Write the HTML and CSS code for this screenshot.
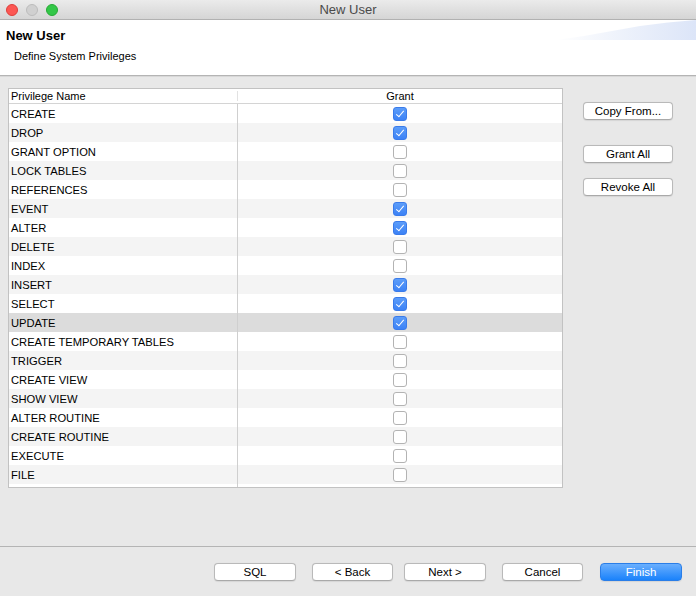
FILE: index.html
```html
<!DOCTYPE html>
<html>
<head>
<meta charset="utf-8">
<link rel="stylesheet" href="styles.css">
</head>
<body>
<div class="window">
  <div class="titlebar">
    <div class="lights">
      <span class="light red"></span>
      <span class="light gray"></span>
      <span class="light green"></span>
    </div>
    <div class="title">New User</div>
  </div>
  <div class="header">
    <div class="h-title">New User</div>
    <div class="h-sub">Define System Privileges</div>
  </div>
  <div class="main">
    <div class="table">
      <div class="thead">
        <div class="th th-name">Privilege Name</div>
        <div class="th th-grant">Grant</div>
      </div>
      <div class="tbody">
        <div class="row"><div class="cell name">CREATE</div><div class="cell grant"><span class="cb on"></span></div></div>
        <div class="row alt"><div class="cell name">DROP</div><div class="cell grant"><span class="cb on"></span></div></div>
        <div class="row"><div class="cell name">GRANT OPTION</div><div class="cell grant"><span class="cb"></span></div></div>
        <div class="row alt"><div class="cell name">LOCK TABLES</div><div class="cell grant"><span class="cb"></span></div></div>
        <div class="row"><div class="cell name">REFERENCES</div><div class="cell grant"><span class="cb"></span></div></div>
        <div class="row alt"><div class="cell name">EVENT</div><div class="cell grant"><span class="cb on"></span></div></div>
        <div class="row"><div class="cell name">ALTER</div><div class="cell grant"><span class="cb on"></span></div></div>
        <div class="row alt"><div class="cell name">DELETE</div><div class="cell grant"><span class="cb"></span></div></div>
        <div class="row"><div class="cell name">INDEX</div><div class="cell grant"><span class="cb"></span></div></div>
        <div class="row alt"><div class="cell name">INSERT</div><div class="cell grant"><span class="cb on"></span></div></div>
        <div class="row"><div class="cell name">SELECT</div><div class="cell grant"><span class="cb on"></span></div></div>
        <div class="row sel"><div class="cell name">UPDATE</div><div class="cell grant"><span class="cb on"></span></div></div>
        <div class="row"><div class="cell name">CREATE TEMPORARY TABLES</div><div class="cell grant"><span class="cb"></span></div></div>
        <div class="row alt"><div class="cell name">TRIGGER</div><div class="cell grant"><span class="cb"></span></div></div>
        <div class="row"><div class="cell name">CREATE VIEW</div><div class="cell grant"><span class="cb"></span></div></div>
        <div class="row alt"><div class="cell name">SHOW VIEW</div><div class="cell grant"><span class="cb"></span></div></div>
        <div class="row"><div class="cell name">ALTER ROUTINE</div><div class="cell grant"><span class="cb"></span></div></div>
        <div class="row alt"><div class="cell name">CREATE ROUTINE</div><div class="cell grant"><span class="cb"></span></div></div>
        <div class="row"><div class="cell name">EXECUTE</div><div class="cell grant"><span class="cb"></span></div></div>
        <div class="row alt"><div class="cell name">FILE</div><div class="cell grant"><span class="cb"></span></div></div>
        <div class="row filler"><div class="cell name"></div><div class="cell grant"></div></div>
      </div>
    </div>
    <div class="side">
      <button class="btn side-btn copy">Copy From...</button>
      <button class="btn side-btn grant-all">Grant All</button>
      <button class="btn side-btn">Revoke All</button>
    </div>
  </div>
  <div class="footer">
    <button class="btn foot-btn b-sql">SQL</button>
    <button class="btn foot-btn b-back">&lt; Back</button>
    <button class="btn foot-btn b-next">Next &gt;</button>
    <button class="btn foot-btn b-cancel">Cancel</button>
    <button class="btn foot-btn primary">Finish</button>
  </div>
</div>
</body>
</html>
```
FILE: styles.css
```css
* { box-sizing: border-box; }
html, body {
  margin: 0;
  padding: 0;
}
body {
  width: 696px;
  height: 596px;
  overflow: hidden;
  background: #e8e8e8;
  font-family: "Liberation Sans", Arial, sans-serif;
  font-size: 11px;
  color: #000;
}
.window {
  display: flex;
  flex-direction: column;
  height: 596px;
}
.titlebar {
  height: 20px;
  flex: none;
  display: flex;
  align-items: center;
  position: relative;
  background: linear-gradient(#ebebeb, #d5d5d5);
  border-bottom: 1px solid #b1b1b1;
}
.lights {
  display: flex;
  gap: 8px;
  padding-left: 6px;
}
.light {
  width: 12px;
  height: 12px;
  border-radius: 50%;
  display: block;
}
.light.red { background: #fc5753; border: 1px solid #de3f3b; }
.light.gray { background: #d0d0d0; border: 1px solid #bcbcbc; }
.light.green { background: #33c748; border: 1px solid #27aa35; }
.title {
  position: absolute;
  left: 0;
  right: 0;
  top: 2px;
  text-align: center;
  font-size: 13px;
  color: #4a4a4a;
  line-height: 15px;
}
.header {
  flex: none;
  height: 56px;
  background: #fff;
  position: relative;
  border-bottom: 1px solid #b4b4b4;
  box-shadow: 0 1px 0 #d8d8d8;
  padding-top: 8px;
  overflow: hidden;
}
.header::after {
  content: "";
  position: absolute;
  right: 0;
  top: 0;
  width: 140px;
  height: 20px;
  background: linear-gradient(to right, rgba(220,229,248,0) 0%, rgba(224,232,248,0.55) 45%, #dce5f8 100%);
  clip-path: polygon(0 100%, 20% 80%, 40% 55%, 60% 30%, 80% 12%, 100% 0, 100% 100%);
}
.h-title {
  font-weight: bold;
  font-size: 13px;
  padding-left: 6px;
  line-height: 15px;
}
.h-sub {
  padding-left: 14px;
  margin-top: 7px;
  font-size: 11px;
  line-height: 13px;
}
.main {
  flex: 1;
  display: flex;
  align-items: flex-start;
  padding: 11px 0 0 8px;
  margin-top: 1px;
}
.table {
  width: 555px;
  height: 400px;
  background: #fff;
  border: 1px solid #c2c2c2;
  display: flex;
  flex-direction: column;
}
.thead {
  display: grid;
  grid-template-columns: 229px 1fr;
  height: 15px;
  border-bottom: 1px solid #d4d4d4;
  flex: none;
}
.th {
  line-height: 14px;
  font-size: 11px;
}
.th-name {
  padding-left: 2px;
  position: relative;
}
.th-name::after {
  content: "";
  position: absolute;
  right: 0;
  top: 2px;
  height: 10px;
  width: 1px;
  background: #e2e2e2;
}
.th-grant { text-align: center; }
.tbody {
  flex: 1;
  display: flex;
  flex-direction: column;
}
.row {
  display: grid;
  grid-template-columns: 229px 1fr;
  height: 19px;
  flex: none;
}
.row.alt { background: #f4f4f4; }
.row.sel { background: #dcdcdc; }
.row.filler { flex: 1; height: auto; }
.cell {
  display: flex;
  align-items: center;
}
.cell.name {
  padding-left: 2px;
  border-right: 1px solid #cfcfcf;
  font-size: 11.2px;
}
.cell.grant {
  justify-content: center;
}
.cb {
  width: 14px;
  height: 14px;
  border-radius: 3px;
  background: #fff;
  border: 1px solid #b3b3b3;
  display: block;
  position: relative;
}
.cb.on {
  background: linear-gradient(#5c9df9, #3c82f6);
  border-color: #3a7bea;
}
.cb.on::after {
  content: "";
  position: absolute;
  left: 4px;
  top: 1px;
  width: 3px;
  height: 7px;
  border-right: 1.6px solid #fff;
  border-bottom: 1.6px solid #fff;
  transform: rotate(40deg);
}
.side {
  display: flex;
  flex-direction: column;
  padding-left: 20px;
  padding-top: 14px;
}
.btn {
  font-family: "Liberation Sans", Arial, sans-serif;
  font-size: 11px;
  color: #000;
  background: #fff;
  border: 1px solid #b9b9b9;
  border-bottom-color: #a9a9a9;
  border-radius: 4px;
  height: 18px;
  padding: 0;
  line-height: 16px;
  box-shadow: 0 0.5px 1px rgba(0,0,0,0.08);
}
.side-btn {
  width: 90px;
  margin-bottom: 15px;
  font-size: 11.5px;
}
.side-btn.copy { margin-bottom: 25px; }
.footer {
  flex: none;
  height: 50px;
  border-top: 1px solid #b4b4b4;
  display: flex;
  align-items: flex-start;
  padding-top: 16px;
  padding-left: 214px;
}
.foot-btn {
  width: 82px;
  font-size: 11.5px;
}
.b-sql { margin-right: 16px; }
.b-back { width: 81px; margin-right: 11px; }
.b-next { margin-right: 16px; }
.b-cancel { width: 81px; margin-right: 17px; }
.primary {
  background: linear-gradient(#6aaffe, #1a82fb);
  border-color: #2a7ee8;
  color: #fff;
}
```
